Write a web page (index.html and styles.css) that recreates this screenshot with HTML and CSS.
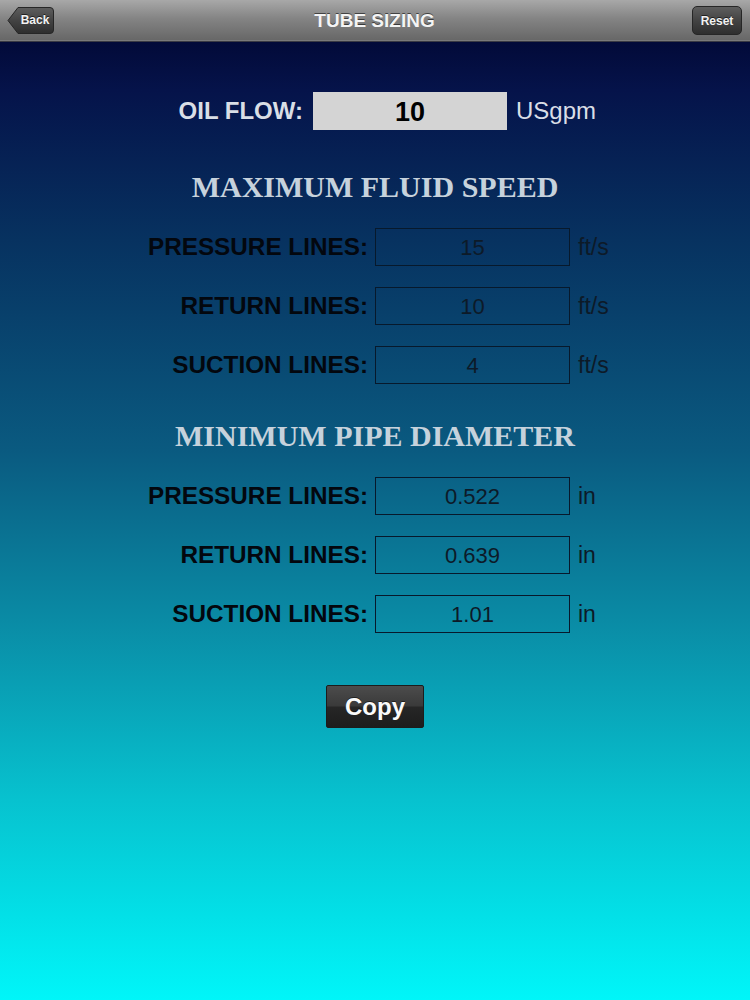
FILE: index.html
```html
<!DOCTYPE html>
<html>
<head>
<meta charset="utf-8">
<link rel="stylesheet" href="styles.css">
</head>
<body>
<div class="page">
  <header class="navbar">
    <button class="nav-btn back-btn">
      <svg class="back-shape" width="48" height="29" viewBox="0 0 48 29">
        <defs>
          <linearGradient id="bg1" x1="0" y1="0" x2="0" y2="1">
            <stop offset="0" stop-color="#5e5e5e"/>
            <stop offset="0.5" stop-color="#434343"/>
            <stop offset="1" stop-color="#2e2e2e"/>
          </linearGradient>
        </defs>
        <path d="M1 14.5 L11 1.5 H43 Q46.5 1.5 46.5 5 V24 Q46.5 27.5 43 27.5 H11 Z" fill="url(#bg1)" stroke="#262626" stroke-width="1"/>
      </svg>
      <span class="btn-text back-text">Back</span>
    </button>
    <h1 class="nav-title">TUBE SIZING</h1>
    <button class="nav-btn reset-btn"><span class="btn-text">Reset</span></button>
  </header>

  <main class="content">
    <div class="oil-row">
      <span class="oil-label">OIL FLOW:</span>
      <div class="oil-box">10</div>
      <span class="oil-unit">USgpm</span>
    </div>

    <h2 class="section-title first">MAXIMUM FLUID SPEED</h2>
    <div class="rows">
      <div class="row"><span class="row-label">PRESSURE LINES:</span><div class="row-box">15</div><span class="row-unit">ft/s</span></div>
      <div class="row"><span class="row-label">RETURN LINES:</span><div class="row-box">10</div><span class="row-unit">ft/s</span></div>
      <div class="row"><span class="row-label">SUCTION LINES:</span><div class="row-box">4</div><span class="row-unit">ft/s</span></div>
    </div>

    <h2 class="section-title second">MINIMUM PIPE DIAMETER</h2>
    <div class="rows">
      <div class="row"><span class="row-label">PRESSURE LINES:</span><div class="row-box">0.522</div><span class="row-unit">in</span></div>
      <div class="row"><span class="row-label">RETURN LINES:</span><div class="row-box">0.639</div><span class="row-unit">in</span></div>
      <div class="row"><span class="row-label">SUCTION LINES:</span><div class="row-box">1.01</div><span class="row-unit">in</span></div>
    </div>

    <div class="copy-wrap">
      <button class="copy-btn">Copy</button>
    </div>
  </main>
</div>
</body>
</html>
```

FILE: styles.css
```css
html, body {
  margin: 0;
  padding: 0;
}
body {
  width: 750px;
  height: 1000px;
  overflow: hidden;
  font-family: "Liberation Sans", Arial, sans-serif;
}
.page {
  width: 750px;
  height: 1000px;
  display: flex;
  flex-direction: column;
  background: linear-gradient(to bottom,
    #00022a 0%,
    #05134a 9%,
    #073260 24%,
    #0a5a80 45%,
    #0a8ba5 62%,
    #07c2cf 80%,
    #00f6f9 100%);
}
.navbar {
  height: 42px;
  flex: 0 0 42px;
  box-sizing: border-box;
  display: flex;
  align-items: center;
  padding: 0 8px 0 7px;
  background: linear-gradient(to bottom, #a8a8a8 0%, #848484 45%, #666666 100%);
  border-bottom: 1px solid #3a3a44;
  box-shadow: inset 0 -1px 0 #7a7a7a;
}
.nav-btn {
  border: 0;
  padding: 0;
  margin: 0;
  background: none;
  height: 29px;
  cursor: pointer;
  position: relative;
}
.back-btn {
  width: 48px;
}
.back-shape {
  position: absolute;
  left: 0;
  top: 0;
}
.btn-text {
  position: relative;
  font-family: "Liberation Sans", Arial, sans-serif;
  font-weight: bold;
  font-size: 12px;
  color: #f2f2f2;
  text-shadow: 0 -1px 0 rgba(0,0,0,0.6);
}
.back-text {
  display: block;
  padding-left: 10px;
  padding-right: 2px;
  line-height: 29px;
}
.reset-btn {
  width: 50px;
  box-sizing: border-box;
  border: 1px solid #262626;
  border-radius: 5px;
  background: linear-gradient(to bottom, #5e5e5e 0%, #434343 50%, #2e2e2e 100%);
  line-height: 27px;
}
.nav-title {
  flex: 1;
  margin: 0;
  text-align: center;
  font-family: "Liberation Sans", Arial, sans-serif;
  font-weight: bold;
  font-size: 19px;
  color: #f4f4f4;
  text-shadow: 0 -1px 0 rgba(0,0,0,0.55);
  letter-spacing: 0;
  padding-left: 2px;
}

.content {
  flex: 1;
  display: flex;
  flex-direction: column;
  padding-top: 50px;
}

.oil-row {
  display: grid;
  grid-template-columns: 303px 194px 1fr;
  column-gap: 10px;
  align-items: center;
}
.oil-label {
  text-align: right;
  font-weight: bold;
  font-size: 24px;
  color: #d9dee6;
}
.oil-box {
  height: 38px;
  background: #d4d4d4;
  text-align: center;
  font-weight: bold;
  font-size: 27px;
  line-height: 40px;
  color: #000;
}
.oil-unit {
  font-size: 24px;
  color: #d9dee6;
  margin-left: -1px;
}

.section-title {
  margin: 0;
  text-align: center;
  font-family: "Liberation Serif", "Times New Roman", serif;
  font-weight: bold;
  font-size: 30px;
  line-height: 36px;
  color: #c6d2dc;
}
.section-title.first {
  margin-top: 39px;
  margin-bottom: 23px;
}
.section-title.second {
  margin-top: 34px;
  margin-bottom: 23px;
}

.rows {
  display: flex;
  flex-direction: column;
  gap: 21px;
}
.row {
  display: grid;
  grid-template-columns: 368px 195px 1fr;
  column-gap: 7px;
  align-items: center;
}
.row-label {
  text-align: right;
  font-weight: bold;
  font-size: 24.3px;
  color: #03070e;
}
.row-box {
  height: 38px;
  box-sizing: border-box;
  border: 1px solid #07192c;
  text-align: center;
  font-size: 22px;
  line-height: 38px;
  color: #0d1a28;
}
.row-unit {
  font-size: 23px;
  color: #0d1a28;
  padding-left: 1px;
}

.copy-wrap {
  display: flex;
  justify-content: center;
  margin-top: 52px;
}
.copy-btn {
  width: 98px;
  height: 43px;
  border: 1px solid #1c1c1c;
  border-radius: 2px;
  background: linear-gradient(to bottom, #4c4c4c 0%, #3a3a3a 48%, #262626 52%, #1d1d1d 100%);
  color: #fafafa;
  font-family: "Liberation Sans", Arial, sans-serif;
  font-weight: bold;
  font-size: 24px;
  padding: 0;
  text-shadow: 0 -1px 0 rgba(0,0,0,0.5);
}
```
